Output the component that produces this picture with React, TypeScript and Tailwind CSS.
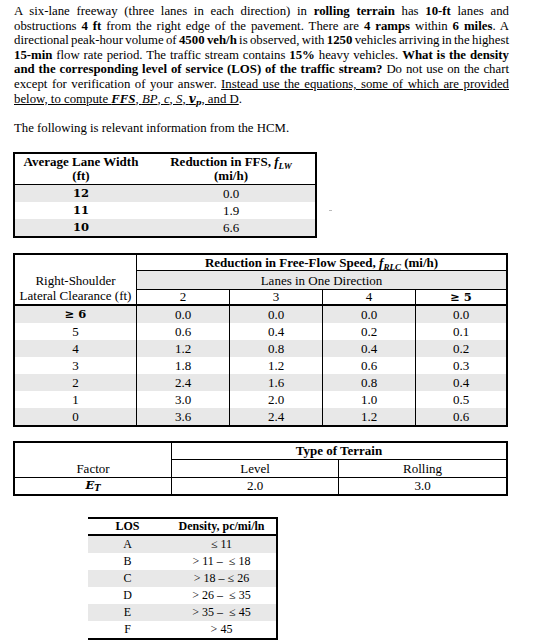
const serif = "font-['Liberation_Serif',serif]";
const cam = "font-['DejaVu_Serif',serif]";

const Line = ({ children, last }: { children: React.ReactNode; last?: boolean }) => (
  <div
    className={
      last
        ? "text-left whitespace-nowrap"
        : "text-justify [text-align-last:justify] whitespace-nowrap [word-spacing:-2px]"
    }
  >
    {children}
  </div>
);

const gray = "bg-[#e8e8e8]";

const App = () => {
  const rlc = [
    ["≥ 6", "0.0", "0.0", "0.0", "0.0"],
    ["5", "0.6", "0.4", "0.2", "0.1"],
    ["4", "1.2", "0.8", "0.4", "0.2"],
    ["3", "1.8", "1.2", "0.6", "0.3"],
    ["2", "2.4", "1.6", "0.8", "0.4"],
    ["1", "3.0", "2.0", "1.0", "0.5"],
    ["0", "3.6", "2.4", "1.2", "0.6"],
  ];
  const los = [
    ["A", "≤ 11"],
    ["B", "> 11 –  ≤ 18"],
    ["C", "> 18 – ≤ 26"],
    ["D", "> 26 –  ≤ 35"],
    ["E", "> 35 –  ≤ 45"],
    ["F", "> 45"],
  ];

  return (
    <div className={`w-[534px] h-[642px] bg-white text-black ${serif}`}>
      {/* question text */}
      <div className="pt-[4px] pl-[14px] w-[509px] text-[12.8px] leading-[14.6px]">
        <Line>
          A six-lane freeway (three lanes in each direction) in <b>rolling terrain</b> has <b>10-ft</b> lanes and
        </Line>
        <Line>
          obstructions <b>4 ft</b> from the right edge of the pavement. There are <b>4 ramps</b> within <b>6 miles</b>. A
        </Line>
        <Line>
          directional peak-hour volume of <b>4500 veh/h</b> is observed, with <b>1250</b> vehicles arriving in the highest
        </Line>
        <Line>
          <b>15-min</b> flow rate period. The traffic stream contains <b>15%</b> heavy vehicles. <b>What is the density</b>
        </Line>
        <Line>
          <b>and the corresponding level of service (LOS) of the traffic stream?</b> Do not use on the chart
        </Line>
        <Line>
          except for verification of your answer. <span className="underline">Instead use the equations, some of which are provided</span>
        </Line>
        <Line last>
          <span className="underline">
            below, to compute <b><i>FFS</i></b>, <i>BP</i>, <i>c</i>, <i>S</i>,{" "}
            <b className={`${cam} italic text-[12px]`}>v<sub className="text-[8px]">p</sub></b>, and D
          </span>
          .
        </Line>
        <div className="mt-[14.6px]">The following is relevant information from the HCM.</div>
      </div>

      {/* lane width table */}
      <div className="flex mt-[17px] ml-[13px]">
        <div className="w-[304px] border-2 border-black text-[13px]">
          <div className="flex h-[31px] border-b border-black font-bold leading-[14px] text-center">
            <div className="w-[132px] pt-[1px]">
              Average Lane Width
              <br />
              (ft)
            </div>
            <div className="flex-1 pt-[1px]">
              Reduction in FFS, <i>f</i>
              <sub className="italic text-[9px]">LW</sub>
              <br />
              (mi/h)
            </div>
          </div>
          {[
            ["12", "0.0"],
            ["11", "1.9"],
            ["10", "6.6"],
          ].map(([a, b], i) => (
            <div key={a} className={`flex h-[17px] items-center text-center ${i % 2 === 0 ? gray : ""}`}>
              <div className={`w-[132px] ${cam} font-bold text-[11.5px]`}>{a}</div>
              <div className="flex-1">{b}</div>
            </div>
          ))}
        </div>
        <div className="ml-[12px] mt-[58px] w-[3px] h-[1px] bg-[#bbb]" />
      </div>

      {/* right-shoulder lateral clearance table */}
      <div className="mt-[15px] ml-[13px] w-[495px] border-2 border-black text-[13px]">
        <div className="flex">
          <div className="w-[122px] h-[51px] border-r border-b-2 border-black flex flex-col justify-end items-center pb-[1px] leading-[14.5px]">
            <div>Right-Shoulder</div>
            <div>Lateral Clearance (ft)</div>
          </div>
          <div className="flex-1 flex flex-col">
            <div className="h-[16px] border-b border-black text-center font-bold leading-[15px]">
              Reduction in Free-Flow Speed, <i>f</i>
              <sub className="italic text-[9px]">RLC</sub> (mi/h)
            </div>
            <div className={`h-[19px] border-b border-black ${gray} flex items-center justify-center`}>
              Lanes in One Direction
            </div>
            <div className="h-[16px] border-b-2 border-black flex items-center text-center leading-[14px]">
              <div className="w-[93px] h-full border-r border-black">2</div>
              <div className="w-[93px] h-full border-r border-black">3</div>
              <div className="w-[93px] h-full border-r border-black">4</div>
              <div className={`flex-1 h-full ${cam} font-bold text-[11.5px]`}>≥ 5</div>
            </div>
          </div>
        </div>
        {rlc.map((r, i) => (
          <div key={i} className={`flex h-[17px] text-center leading-[17px] ${i % 2 === 0 ? gray : ""}`}>
            <div className={`w-[122px] border-r border-black ${i === 0 ? `${cam} font-bold text-[11.5px]` : ""}`}>{r[0]}</div>
            <div className="w-[93px] border-r border-black">{r[1]}</div>
            <div className="w-[93px] border-r border-black">{r[2]}</div>
            <div className="w-[93px] border-r border-black">{r[3]}</div>
            <div className="flex-1">{r[4]}</div>
          </div>
        ))}
      </div>

      {/* passenger car equivalent table */}
      <div className="mt-[14px] ml-[13px] w-[495px] border-2 border-black text-[13px]">
        <div className="flex">
          <div className="w-[157px] h-[35px] border-r border-b border-black flex items-end justify-center pb-[1px] leading-[15px]">
            Factor
          </div>
          <div className="flex-1">
            <div className="h-[17px] border-b border-black text-center font-bold leading-[16px]">Type of Terrain</div>
            <div className="flex h-[18px] border-b border-black text-center leading-[17px]">
              <div className="w-[167px] border-r border-black">Level</div>
              <div className="flex-1">Rolling</div>
            </div>
          </div>
        </div>
        <div className="flex h-[16px] text-center leading-[15px]">
          <div className={`w-[157px] border-r border-black ${cam} font-bold italic text-[11.5px]`}>
            E<sub className="text-[8.5px]">T</sub>
          </div>
          <div className="w-[167px] border-r border-black">2.0</div>
          <div className="flex-1">3.0</div>
        </div>
      </div>

      {/* LOS table */}
      <div className="mt-[21px] ml-[88px] w-[190px] border-y-2 border-r-2 border-black text-[12px]">
        <div className="flex h-[17px] border-b-2 border-black font-bold text-center leading-[15px]">
          <div className="w-[79px]">LOS</div>
          <div className="flex-1">Density, pc/mi/ln</div>
        </div>
        {los.map(([a, b], i) => (
          <div key={a} className={`flex h-[17px] text-center leading-[17px] ${i % 2 === 0 ? gray : ""}`}>
            <div className="w-[79px]">{a}</div>
            <div className="flex-1 whitespace-pre">{b}</div>
          </div>
        ))}
      </div>
    </div>
  );
};

export default App;
